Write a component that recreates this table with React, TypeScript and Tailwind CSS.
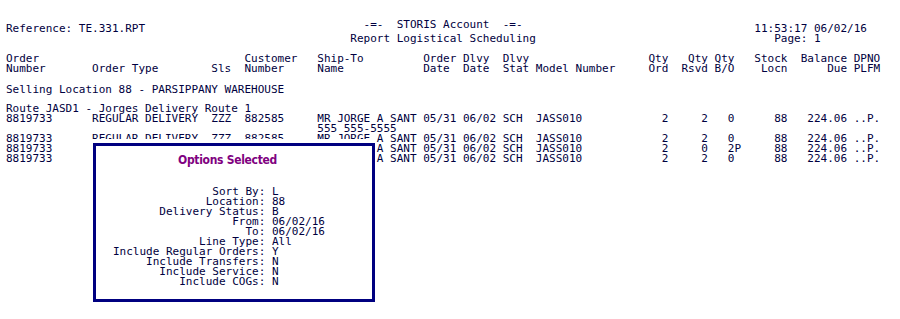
const at = (parts: [number, string][]) => {
  let s = ''
  for (const [col, text] of parts) s = s.padEnd(col, ' ') + text
  return s
}

const row = (rsvd: string, bo: string) =>
  at([
    [0, '8819733'],
    [13, 'REGULAR DELIVERY'],
    [31, 'ZZZ'],
    [36, '882585'],
    [47, 'MR JORGE A SANT'],
    [63, '05/31'],
    [69, '06/02'],
    [75, 'SCH'],
    [80, 'JASS010'],
    [99, '2'],
    [105, rsvd],
    [109, bo],
    [116, '88'],
    [121, '224.06'],
    [128, '..P.'],
  ])

const HEAD_1 = at([
  [0, 'Order'],
  [36, 'Customer'],
  [47, 'Ship-To'],
  [63, 'Order'],
  [69, 'Dlvy'],
  [75, 'Dlvy'],
  [97, 'Qty'],
  [103, 'Qty'],
  [107, 'Qty'],
  [113, 'Stock'],
  [120, 'Balance'],
  [128, 'DPNO'],
])

const HEAD_2 = at([
  [0, 'Number'],
  [13, 'Order Type'],
  [31, 'Sls'],
  [36, 'Number'],
  [47, 'Name'],
  [63, 'Date'],
  [69, 'Date'],
  [75, 'Stat'],
  [80, 'Model Number'],
  [97, 'Ord'],
  [102, 'Rsvd'],
  [107, 'B/O'],
  [114, 'Locn'],
  [124, 'Due'],
  [128, 'PLFM'],
])

const OPTIONS: [string, string][] = [
  ['Sort By:', 'L'],
  ['Location:', '88'],
  ['Delivery Status:', 'B'],
  ['From:', '06/02/16'],
  ['To:', '06/02/16'],
  ['Line Type:', 'All'],
  ['Include Regular Orders:', 'Y'],
  ['Include Transfers:', 'N'],
  ['Include Service:', 'N'],
  ['Include COGs:', 'N'],
]

export default function App() {
  return (
    <main className="relative h-[319px] w-[900px] overflow-hidden bg-white pl-[6px] font-['DejaVu_Sans_Mono',monospace] text-[11px] whitespace-pre text-[#000040]">
      <div className="flex pt-[18px]">
        <div className="mt-[6px] w-[52ch] leading-[10px]">Reference: TE.331.RPT</div>
        <div className="w-[61ch] leading-[14px]">
          <div>{'  -=-  STORIS Account  -=-'}</div>
          <div>Report Logistical Scheduling</div>
        </div>
        <div className="mt-[6px] leading-[10px]">
          <div>11:53:17 06/02/16</div>
          <div>{'   Page: 1'}</div>
        </div>
      </div>

      <div className="mt-[8px] leading-[10px]">
        <div>{HEAD_1}</div>
        <div>{HEAD_2}</div>
      </div>

      <div className="mt-[11px] leading-[10px]">Selling Location 88 - PARSIPPANY WAREHOUSE</div>

      <div className="mt-[9px] leading-[10px]">
        <div>Route JASD1 - Jorges Delivery Route 1</div>
        <div>{row('2', '0')}</div>
        <div>{at([[47, '555 555-5555']])}</div>
        <div>{row('2', '0')}</div>
        <div>{row('0', '2P')}</div>
        <div>{row('2', '0')}</div>
      </div>

      <div className="absolute top-[139px] left-[92px] bg-white pt-[4px] pl-[1px]">
        <section className="h-[159px] w-[282px] border-[3px] border-[#000080] bg-white">
          <h2 className="pt-[6px] pl-[82px] font-['Liberation_Sans_Narrow','DejaVu_Sans_Condensed',sans-serif] text-[12px] leading-[16px] font-bold tracking-[-0.3px] text-[#800080]">
            Options Selected
          </h2>
          <div className="mt-[19px] ml-[17px] grid grid-cols-[auto_auto] justify-start gap-x-[1ch] leading-[10px]">
            {OPTIONS.map(([label, value]) => (
              <div key={label} className="contents">
                <span className="text-right">{label}</span>
                <span>{value}</span>
              </div>
            ))}
          </div>
        </section>
      </div>
    </main>
  )
}
